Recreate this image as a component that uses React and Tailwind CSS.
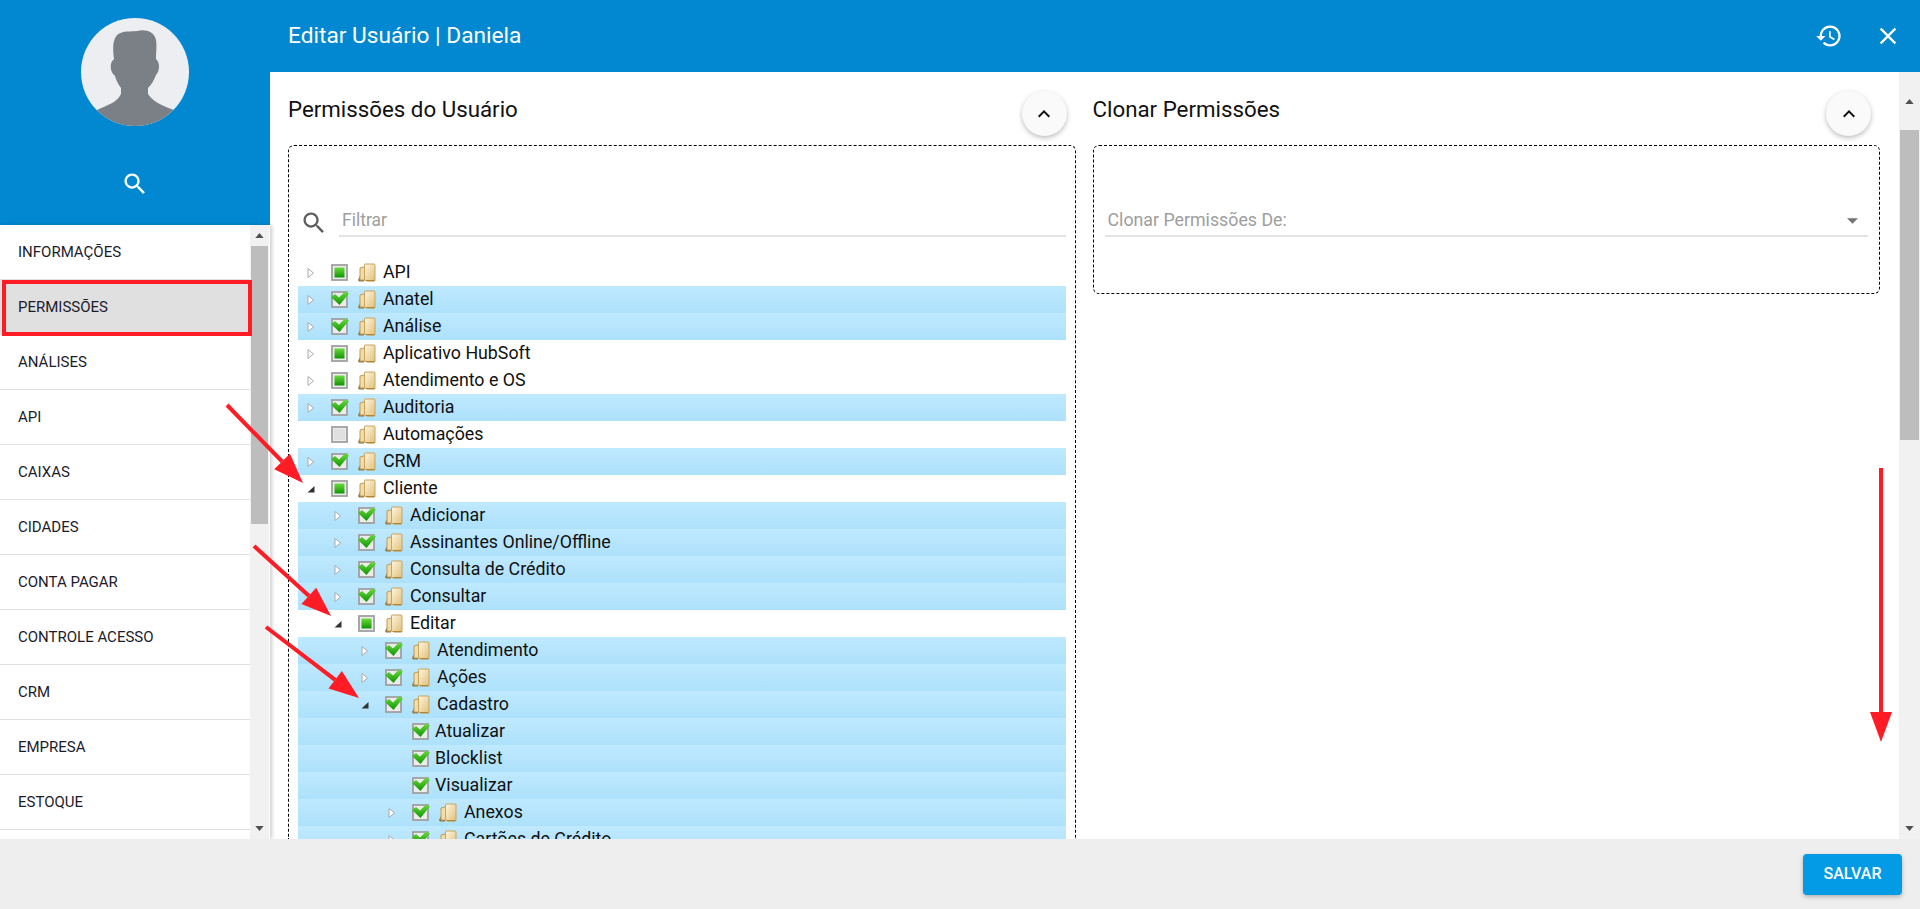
import React from "react";

const menu = [
  "INFORMAÇÕES",
  "PERMISSÕES",
  "ANÁLISES",
  "API",
  "CAIXAS",
  "CIDADES",
  "CONTA PAGAR",
  "CONTROLE ACESSO",
  "CRM",
  "EMPRESA",
  "ESTOQUE",
];

// state: full = all checked (blue row), part = green square, none = empty box
const tree = [
  { label: "API", state: "part" },
  { label: "Anatel", state: "full" },
  { label: "Análise", state: "full" },
  { label: "Aplicativo HubSoft", state: "part" },
  { label: "Atendimento e OS", state: "part" },
  { label: "Auditoria", state: "full" },
  { label: "Automações", state: "none", noArrow: true },
  { label: "CRM", state: "full" },
  { label: "Cliente", state: "part", open: true },
  { label: "Adicionar", state: "full", level: 1 },
  { label: "Assinantes Online/Offline", state: "full", level: 1 },
  { label: "Consulta de Crédito", state: "full", level: 1 },
  { label: "Consultar", state: "full", level: 1 },
  { label: "Editar", state: "part", level: 1, open: true },
  { label: "Atendimento", state: "full", level: 2 },
  { label: "Ações", state: "full", level: 2 },
  { label: "Cadastro", state: "full", level: 2, open: true },
  { label: "Atualizar", state: "full", level: 3, leaf: true },
  { label: "Blocklist", state: "full", level: 3, leaf: true },
  { label: "Visualizar", state: "full", level: 3, leaf: true },
  { label: "Anexos", state: "full", level: 3 },
  { label: "Cartões de Crédito", state: "full", level: 3 },
];

function MuiIcon({ d, className }) {
  return (
    <svg viewBox="0 0 24 24" className={className} fill="currentColor">
      <path d={d} />
    </svg>
  );
}

const SEARCH =
  "M15.5 14h-.79l-.28-.27C15.41 12.59 16 11.11 16 9.5 16 5.91 13.09 3 9.5 3S3 5.91 3 9.5 5.91 16 9.5 16c1.61 0 3.09-.59 4.23-1.57l.27.28v.79l5 4.99L20.49 19l-4.99-5zm-6 0C7.01 14 5 11.99 5 9.5S7.01 5 9.5 5 14 7.01 14 9.5 11.99 14 9.5 14z";
const HISTORY =
  "M13 3c-4.97 0-9 4.03-9 9H1l3.89 3.89.07.14L9 12H6c0-3.87 3.13-7 7-7s7 3.13 7 7-3.13 7-7 7c-1.93 0-3.68-.79-4.94-2.06l-1.42 1.42C8.27 19.99 10.51 21 13 21c4.97 0 9-4.03 9-9s-4.03-9-9-9zm-1 5v5l4.28 2.54.72-1.21-3.5-2.08V8H12z";
const CLOSE =
  "M19 6.41L17.59 5 12 10.59 6.41 5 5 6.41 10.59 12 5 17.59 6.41 19 12 13.41 17.59 19 19 17.59 13.41 12 19 6.41z";
const CHEVRON_UP = "M7.41 15.41L12 10.83l4.59 4.58L18 14l-6-6-6 6z";

function Folder() {
  return (
    <svg viewBox="0 0 18 19" className="w-[18px] h-[19px] shrink-0">
      <defs>
        <linearGradient id="folderFront" x1="0" y1="0" x2="1" y2="1">
          <stop offset="0" stopColor="#fdf6e0" />
          <stop offset="1" stopColor="#e2bf78" />
        </linearGradient>
      </defs>
      <path d="M0 17 L2 13 L6 13 L6 18.5 L1 18.5 Z" fill="#8a7444" />
      <path d="M2 17 V5 L8 3.5 V17 Z" fill="#f3dca6" stroke="#bd9c5c" strokeWidth="1" />
      <path d="M6.5 17 V1.5 Q6.5 1 7 1 H16 Q17 1 17 2 V17.5 Q17 18 16 18 H10 Z" fill="url(#folderFront)" stroke="#c9a45c" strokeWidth="1" />
      <path d="M8 17.6 H16.5" stroke="#ad8639" strokeWidth="1.2" />
    </svg>
  );
}

function CheckBox({ state }) {
  return (
    <svg viewBox="0 0 18 17" className="w-[18px] h-[17px] shrink-0 overflow-visible">
      <defs>
        <linearGradient id="greenFill" x1="0" y1="0" x2="0" y2="1">
          <stop offset="0" stopColor="#6adb3c" />
          <stop offset="1" stopColor="#0f9404" />
        </linearGradient>
      </defs>
      <rect x="1" y="1" width="15" height="15" fill="#ececec" stroke="#a0a0a0" strokeWidth="1.8" />
      {state === "none" && <rect x="3" y="3" width="11" height="11" fill="#e0e0e0" />}
      {state === "part" && <rect x="3.5" y="3.5" width="10" height="10" fill="url(#greenFill)" />}
      {state === "full" && (
        <path d="M0 6 L4 3 L8 6.5 L14 0.5 L18 2.5 L8.5 14 Z" fill="url(#greenFill)" />
      )}
    </svg>
  );
}

function Arrow({ open }) {
  return (
    <svg viewBox="0 0 8 10" className="w-2 h-2.5">
      {open ? (
        <path d="M7.5 2 V8.5 H0.5 Z" fill="#333" />
      ) : (
        <path d="M1 0.5 L6.5 5 L1 9.5 Z" fill="#fff" stroke="#aaaaaa" strokeWidth="1" />
      )}
    </svg>
  );
}

function TreeRow({ item }) {
  const level = item.level || 0;
  const band = item.state === "full";
  return (
    <div
      className={`h-[27px] flex items-center text-[17.8px] text-[#111] ${
        band ? "bg-linear-to-b from-[#bfe9ff] to-[#ade1fb]" : "bg-white"
      }`}
      style={{ paddingLeft: 9 + 27 * level }}
    >
      <span className="w-6 flex items-center shrink-0">
        {!item.leaf && !item.noArrow && <Arrow open={item.open} />}
      </span>
      <CheckBox state={item.state} />
      {item.leaf ? (
        <span className="ml-[5px] whitespace-nowrap">{item.label}</span>
      ) : (
        <>
          <span className="ml-[9px]">
            <Folder />
          </span>
          <span className="ml-[7px] whitespace-nowrap">{item.label}</span>
        </>
      )}
    </div>
  );
}

function CollapseButton() {
  return (
    <button className="w-[45px] h-[45px] rounded-full bg-[#fafafa] shadow-[0_2px_5px_rgba(0,0,0,0.26)] flex items-center justify-center text-[#111]">
      <MuiIcon d={CHEVRON_UP} className="w-6 h-6" />
    </button>
  );
}

function SectionHeader({ title }) {
  return (
    <div className="h-[45px] mt-[19px] mb-[9px] flex items-start justify-between">
      <h2 className="text-[22.3px] leading-[37px] text-[#111]">{title}</h2>
      <div className="mr-[9px]">
        <CollapseButton />
      </div>
    </div>
  );
}

function ScrollBar({ top, thumb, className }) {
  return (
    <div className={`flex flex-col bg-[#f1f1f1] shrink-0 ${className}`}>
      <div className="flex items-center justify-center shrink-0" style={{ height: top }}>
        <svg viewBox="0 0 10 6" className="w-[9px] h-[5px]">
          <path d="M5 0 L10 6 H0 Z" fill="#505050" />
        </svg>
      </div>
      <div className="bg-[#bdbdbd] shrink-0 mx-[1px]" style={{ height: thumb }} />
      <div className="flex-1" />
      <div className="h-[21px] flex items-center justify-center shrink-0">
        <svg viewBox="0 0 10 6" className="w-[9px] h-[5px]">
          <path d="M0 0 H10 L5 6 Z" fill="#505050" />
        </svg>
      </div>
    </div>
  );
}

function Sidebar() {
  return (
    <aside className="w-[270px] shrink-0 flex flex-col min-h-0">
      <div className="h-[225px] shrink-0 bg-[#0288d1] flex flex-col items-center pt-[18px]">
        <div className="w-[108px] h-[108px] rounded-full bg-[#eceef2] overflow-hidden">
          <svg viewBox="0 0 108 108" className="w-full h-full">
            <path
              d="M36 17 C42 12 50 14 56 13 C64 11 73 13 75 22 C76 28 75 36 75 41 C79 44 79 53 75 57 C73 62 71 66 67 70 L67 76 C72 84 82 88 93 92 L108 108 H0 L16 92 C26 87 36 85 40 76 L40 70 C37 66 35 62 34 58 C29 54 28 45 33 41 C32 32 31 23 36 17 Z"
              fill="#7b8087"
            />
          </svg>
        </div>
        <div className="mt-[44px] text-white">
          <MuiIcon d={SEARCH} className="w-7 h-7" />
        </div>
      </div>
      <div className="flex-1 flex min-h-0 bg-white relative z-10 shadow-[2px_0_4px_rgba(0,0,0,0.2)]">
        <nav className="flex-1 overflow-hidden">
          {menu.map((item) => (
            <div
              key={item}
              className={`h-[55px] pl-[18px] flex items-center text-[15px] text-[#1c1c2b] border-b border-[#e0e0e0] ${
                item === "PERMISSÕES" ? "bg-[#e0e0e0]" : ""
              }`}
            >
              {item}
            </div>
          ))}
        </nav>
        <ScrollBar top={21} thumb={278} className="w-[19px] mr-[1px]" />
      </div>
    </aside>
  );
}

function Annotations() {
  const arrows = [
    [227, 405, 303, 483],
    [254, 546, 331, 616],
    [266, 627, 359, 698],
    [1881, 468, 1881, 742],
  ];
  return (
    <svg viewBox="0 0 1920 909" className="absolute inset-0 w-[1920px] h-[909px] pointer-events-none z-20">
      {arrows.map(([x1, y1, x2, y2]) => {
        const a = Math.atan2(y2 - y1, x2 - x1);
        const len = 30;
        const half = 11;
        const bx = x2 - len * Math.cos(a);
        const by = y2 - len * Math.sin(a);
        const nx = -Math.sin(a) * half;
        const ny = Math.cos(a) * half;
        return (
          <g key={x1 + "-" + y1}>
            <line x1={x1} y1={y1} x2={bx} y2={by} stroke="#ff1c24" strokeWidth="4" />
            <polygon points={`${x2},${y2} ${bx + nx},${by + ny} ${bx - nx},${by - ny}`} fill="#ff1c24" />
          </g>
        );
      })}
    </svg>
  );
}

export default function App() {
  return (
    <div
      className="relative w-full h-[909px] overflow-hidden flex flex-col bg-white"
      style={{ fontFamily: "Roboto, sans-serif" }}
    >
      <div className="flex-1 flex min-h-0">
        <Sidebar />
        <main className="flex-1 flex flex-col min-w-0">
          <header className="h-[72px] shrink-0 bg-[#0288d1] flex items-center justify-between pl-[18px] pr-[18px] text-white">
            <h1 className="text-[22.7px] font-normal">Editar Usuário | Daniela</h1>
            <div className="flex items-center gap-[31px]">
              <MuiIcon d={HISTORY} className="w-7 h-7" />
              <MuiIcon d={CLOSE} className="w-7 h-7" />
            </div>
          </header>
          <div className="flex-1 flex min-h-0">
            <div className="flex-1 flex gap-[17px] pl-[18px] pr-[19px] min-w-0 overflow-hidden">
              <section className="flex-1 flex flex-col min-w-0 min-h-0">
                <SectionHeader title="Permissões do Usuário" />
                <div className="flex-1 min-h-0 overflow-hidden border border-dashed border-black rounded-md rounded-b-none border-b-0 px-[9px]">
                  <div className="h-[91px] pl-[2px] flex items-end gap-[11px]">
                    <div className="text-[#5f5f5f] leading-none">
                      <MuiIcon d={SEARCH} className="w-7 h-7 block" />
                    </div>
                    <div className="flex-1 h-[31px] border-b-2 border-[#e3e3e3] pl-[3px] text-[17.5px] leading-[28px] text-[#9e9e9e]">
                      Filtrar
                    </div>
                  </div>
                  <div className="mt-[22px]">
                    {tree.map((item) => (
                      <TreeRow key={item.label} item={item} />
                    ))}
                  </div>
                </div>
              </section>
              <section className="flex-1 flex flex-col min-w-0">
                <SectionHeader title="Clonar Permissões" />
                <div className="h-[149px] border border-dashed border-black rounded-md px-[11px]">
                  <div className="mt-[60px] h-[31px] border-b-2 border-[#e3e3e3] pl-[3px] pr-[10px] flex items-center justify-between text-[17.8px] text-[#9e9e9e]">
                    <span>Clonar Permissões De:</span>
                    <svg viewBox="0 0 10 5" className="w-[11px] h-[6px]">
                      <path d="M0 0 H10 L5 5 Z" fill="#757575" />
                    </svg>
                  </div>
                </div>
              </section>
            </div>
            <ScrollBar top={58} thumb={310} className="w-[21px]" />
          </div>
        </main>
      </div>
      <footer className="h-[70px] shrink-0 bg-[#eeeeee] flex items-center justify-end pr-[18px] z-10">
        <button className="w-[99px] h-[41px] rounded bg-[#039be5] text-white text-[16px] font-medium shadow-[0_2px_4px_rgba(0,0,0,0.25)]">
          SALVAR
        </button>
      </footer>
      <div className="absolute left-[2px] top-[280px] w-[250px] h-[56px] border-4 border-[#ff1c24] z-20 pointer-events-none" />
      <Annotations />
    </div>
  );
}
